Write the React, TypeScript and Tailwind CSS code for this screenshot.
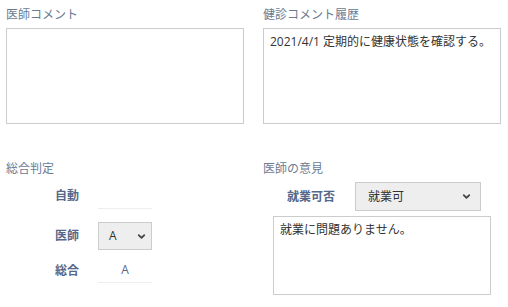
import React from 'react';
import { ChevronDown } from 'lucide-react';

function FieldLabel({ children }: { children: React.ReactNode }) {
  return <div className="h-[16px] leading-[16px] text-[12px] text-[#6b7b93]">{children}</div>;
}

function SelectBox({ value, className }: { value: string; className: string }) {
  return (
    <div
      className={`flex items-center justify-between border border-[#cccccc] bg-[#eeeeee] text-[12px] text-[#333333] ${className}`}
    >
      <span>{value}</span>
      <ChevronDown className="h-[11px] w-[11px] text-[#444444]" strokeWidth={4} />
    </div>
  );
}

export default function App() {
  return (
    <div className="w-[508px] h-[307px] bg-white font-['Open_Sans','Noto_Sans_CJK_JP',sans-serif] text-[12px]">
      <div className="flex gap-[19px] pl-[6px] pt-[7px]">
        <div className="w-[238px]">
          <FieldLabel>医師コメント</FieldLabel>
          <div className="mt-[5px] h-[96px] border border-[#cccccc]" />
        </div>
        <div className="w-[238px]">
          <FieldLabel>健診コメント履歴</FieldLabel>
          <div className="mt-[5px] h-[96px] border border-[#cccccc] px-[6px] py-[5px] leading-[16px] text-[#333333]">
            2021/4/1 定期的に健康状態を確認する。
          </div>
        </div>
      </div>

      <div className="flex gap-[19px] pl-[6px] pt-[37px]">
        <div className="w-[238px]">
          <FieldLabel>総合判定</FieldLabel>
          <div className="mt-[6px] pl-[49px] flex flex-col">
            <div className="flex items-center">
              <div className="w-[43px] font-bold text-[#56688a]">自動</div>
              <div className="h-[26px] w-[54px] border-b border-[#eeeeee]" />
            </div>
            <div className="mt-[13px] flex items-center">
              <div className="w-[43px] font-bold text-[#56688a]">医師</div>
              <SelectBox value="A" className="h-[28px] w-[54px] pl-[10px] pr-[4px]" />
            </div>
            <div className="mt-[8px] flex items-center">
              <div className="w-[43px] font-bold text-[#56688a]">総合</div>
              <div className="flex h-[25px] w-[54px] items-center justify-center border-b border-[#eeeeee] text-[#56688a]">
                A
              </div>
            </div>
          </div>
        </div>
        <div className="w-[238px]">
          <FieldLabel>医師の意見</FieldLabel>
          <div className="mt-[5px] flex items-center pl-[24px]">
            <div className="w-[68px] font-bold text-[#56688a]">就業可否</div>
            <SelectBox value="就業可" className="h-[29px] w-[126px] pl-[12px] pr-[8px]" />
          </div>
          <div className="ml-[10px] mt-[5px] h-[79px] w-[218px] border border-[#cccccc] px-[6px] py-[5px] leading-[16px] text-[#333333]">
            就業に問題ありません。
          </div>
        </div>
      </div>
    </div>
  );
}
